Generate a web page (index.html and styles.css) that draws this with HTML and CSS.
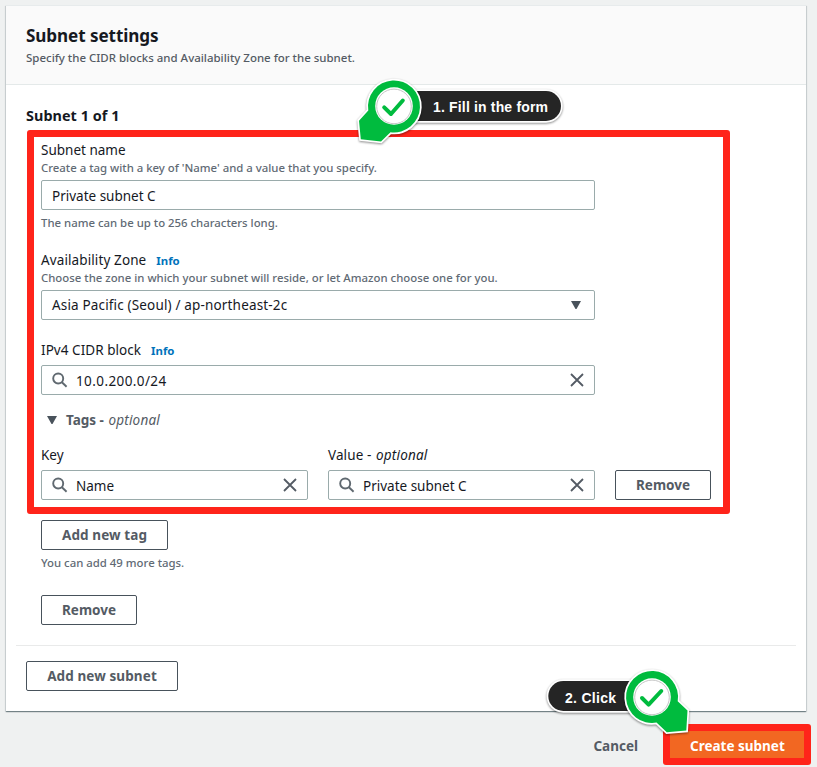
FILE: index.html
```html
<!DOCTYPE html>
<html lang="en">
<head>
<meta charset="utf-8">
<title>Create subnet</title>
<link rel="stylesheet" href="styles.css">
</head>
<body>
<svg class="defs" width="0" height="0" aria-hidden="true">
  <symbol id="search" viewBox="0 0 16 16"><circle cx="6.2" cy="6.5" r="5"/><path d="M9.9 10.2 14.6 14.8"/></symbol>
  <symbol id="close" viewBox="0 0 16 16"><path d="M2 2l12 12M14 2L2 14"/></symbol>
  <symbol id="caret" viewBox="0 0 12 10"><path d="M1 1h10L6.5 9h-1z"/></symbol>
</svg>

<main class="page">
  <section class="card">
    <header class="card-header">
      <h2>Subnet settings</h2>
      <p class="hint dark">Specify the CIDR blocks and Availability Zone for the subnet.</p>
    </header>
    <div class="card-body">
      <h3>Subnet 1 of 1</h3>
      <div class="form">
        <div class="field">
          <div class="label">Subnet name</div>
          <p class="hint">Create a tag with a key of 'Name' and a value that you specify.</p>
          <div class="input"><span class="value">Private subnet C</span></div>
          <p class="hint below">The name can be up to 256 characters long.</p>
        </div>
        <div class="field zone">
          <div class="label"><span class="spaced">Availability Zone</span><a class="info">Info</a></div>
          <p class="hint">Choose the zone in which your subnet will reside, or let Amazon choose one for you.</p>
          <div class="input"><span class="value wide">Asia Pacific (Seoul) / ap-northeast-2c</span><svg class="caret select"><use href="#caret"/></svg></div>
        </div>
        <div class="field cidr">
          <div class="label"><span class="block">IPv4 CIDR block</span><a class="info">Info</a></div>
          <div class="input"><svg class="icon"><use href="#search"/></svg><span class="value digits">10.0.200.0/24</span><svg class="icon clear"><use href="#close"/></svg></div>
        </div>
        <div class="expander"><svg class="caret"><use href="#caret"/></svg><b>Tags -</b><i>optional</i></div>
        <div class="tags">
          <div class="tag">
            <div class="label">Key</div>
            <div class="input"><svg class="icon"><use href="#search"/></svg><span class="value">Name</span><svg class="icon clear"><use href="#close"/></svg></div>
          </div>
          <div class="tag">
            <div class="label"><span class="spaced">Value -</span><i>optional</i></div>
            <div class="input"><svg class="icon"><use href="#search"/></svg><span class="value">Private subnet C</span><svg class="icon clear"><use href="#close"/></svg></div>
          </div>
          <button class="btn remove">Remove</button>
        </div>
        <button class="btn add-tag">Add new tag</button>
        <p class="hint more">You can add 49 more tags.</p>
        <button class="btn remove">Remove</button>
      </div>
    </div>
    <footer class="card-footer"><button class="btn add-subnet">Add new subnet</button></footer>
    <div class="highlight form-highlight"></div>
  </section>
  <div class="actions">
    <button class="link">Cancel</button>
    <div class="primary-wrap"><button class="primary">Create subnet</button></div>
  </div>
</main>

<svg class="callout first" width="230" height="86" viewBox="350 70 230 86">
  <g class="shape">
    <rect class="pill" x="394" y="91" width="167" height="30" rx="15"/>
  </g>
  <g class="shape">
    <path class="pin" d="M368.3 110.5 359 120.7 360.8 139.2 381 141.4 390.5 132.2A26 26 0 1 0 368.3 110.5Z"/>
  </g>
  <circle class="disc" cx="394" cy="106" r="18.8"/>
  <circle class="ring" cx="394" cy="106.4" r="17.3"/>
  <path class="check" d="M384.2 107.3 391 114 402.8 100.5"/>
  <text x="433" y="111.8" textLength="115">1. Fill in the form</text>
</svg>

<svg class="callout second" width="170" height="86" viewBox="536 660 170 86">
  <g class="shape">
    <rect class="pill" x="548.3" y="681" width="104" height="30" rx="15"/>
  </g>
  <g class="shape">
    <path class="pin" d="M677.7 701.2 687.5 710.5 686.3 730.6 666.8 732.2 656.5 722.6A26 26 0 1 1 677.7 701.2Z"/>
  </g>
  <circle class="disc" cx="652" cy="697" r="18.8"/>
  <circle class="ring" cx="652" cy="697.4" r="17.3"/>
  <path class="check" d="M642 698 648.6 704.7 661.3 691"/>
  <text x="565" y="702.8" textLength="51">2. Click</text>
</svg>
</body>
</html>
```

FILE: styles.css
```css
* { box-sizing: border-box; }
body {
  margin: 0;
  height: 767px;
  overflow: hidden;
  background: #eff1f1;
  color: #16191f;
  font: 13.5px/22px "Noto Sans", sans-serif;
}
h2, h3, p { margin: 0; }
button { font: inherit; font-weight: 700; padding: 0; }
.defs { position: absolute; }
.page { padding: 5px 11px 0 6px; }

.card {
  position: relative;
  height: 706px;
  background: #fff;
  border-top: 1px solid #e7ebec;
  box-shadow: 0 1px 1px 0 rgba(0, 28, 36, .4), 1px 1px 1px 0 rgba(0, 28, 36, .1), -1px 1px 1px 0 rgba(0, 28, 36, .1);
}
.card-header {
  height: 79px;
  padding: 18px 20px 0;
  background: #fafafa;
  border-bottom: 1px solid #e4e9e9;
}
h2 { font-size: 17.1px; line-height: 24px; letter-spacing: -.08px; }
h3 { font-size: 14.4px; line-height: 22px; letter-spacing: .05px; }
.hint { font-size: 11.38px; line-height: 16px; font-weight: 500; color: #616a74; }
.hint.dark { margin-top: 2px; font-size: 11.47px; color: #545b64; }
.card-body { padding: 20px 20px 0; }

.form { padding: 12px 0 0 15px; }
.label { display: flex; height: 22px; }
.field .hint { height: 16px; margin-top: -1px; }
.field .hint.below { margin-top: 5px; }
.field .input { width: 554px; margin-top: 4px; }
.zone { margin-top: 18px; }
.cidr { margin-top: 19px; }
.spaced { letter-spacing: .11px; }
.block { letter-spacing: .05px; }
.info { margin-left: 10px; font-size: 11.4px; font-weight: 700; color: #0073bb; line-height: 24px; }

.input {
  display: flex;
  align-items: center;
  height: 30px;
  padding: 0 10px;
  border: 1px solid #9aabab;
  border-radius: 2px;
}
.value { padding-top: 1px; }
.value.wide { padding: 0 0 1px; letter-spacing: .16px; }
.value.digits { letter-spacing: .4px; }
.icon {
  width: 16px;
  height: 16px;
  margin-right: 8px;
  fill: none;
  stroke: #606970;
  stroke-width: 1.9;
}
.clear { margin: 0 -1px 0 auto; stroke: #545b64; stroke-width: 1.8; }
.caret { width: 12px; height: 10px; fill: #49525b; }
.select { margin-left: auto; margin-right: 2px; }

.expander { display: flex; align-items: center; height: 22px; margin: 14px 0 0 5px; color: #545b64; }
.expander b { margin-left: 8px; }
i { margin-left: 4.5px; letter-spacing: .2px; }

.tags { display: flex; align-items: flex-end; gap: 20px; margin-top: 13px; }
.tag { width: 267px; }
.tag .input { margin-top: 4px; }
.btn {
  display: block;
  height: 30px;
  color: #545b64;
  background: #fff;
  border: 1px solid #48525b;
  border-radius: 2px;
}
.remove { width: 96px; }
.add-tag { width: 127px; margin-top: 20px; letter-spacing: .1px; }
.add-subnet { width: 152px; letter-spacing: .1px; }
.more { margin: 5px 0 24px; }
.card-footer { margin: 20px 10px 0; padding: 15px 10px 0; border-top: 1px solid #e9eaea; }

.highlight { position: absolute; border: 7px solid #ff241a; border-radius: 3px; }
.form-highlight { left: 21px; top: 124px; width: 703px; height: 384px; }

.actions { display: flex; justify-content: flex-end; align-items: center; gap: 25px; margin: 13px -5px 0 0; }
.link { border: 0; padding-top: 2px; background: none; color: #545b64; }
.primary-wrap { padding: 7px; background: #ff241a; border-radius: 3px; }
.primary { display: block; width: 134px; height: 27px; padding: 2px 0 0 20px; text-align: left; border: 0; background: #f26722; color: #fff; }

.callout { position: absolute; overflow: visible; }
.first { left: 350px; top: 70px; }
.second { left: 536px; top: 660px; }
.shape { filter: drop-shadow(0 1.5px 1.2px rgba(0, 0, 0, .45)); }
.pill, .pin { stroke: #fff; stroke-width: 3.4; stroke-linejoin: miter; paint-order: stroke; }
.pill { fill: #252525; }
.pin { fill: #00bb3e; }
.disc { fill: #fff; }
.ring { fill: #fff; stroke: #c6c6c6; stroke-width: 1; }
.check { fill: none; stroke: #00bb3e; stroke-width: 4; stroke-linecap: round; stroke-linejoin: round; }
.callout text { fill: #fff; font: bold 14px "Liberation Sans", sans-serif; }
```
